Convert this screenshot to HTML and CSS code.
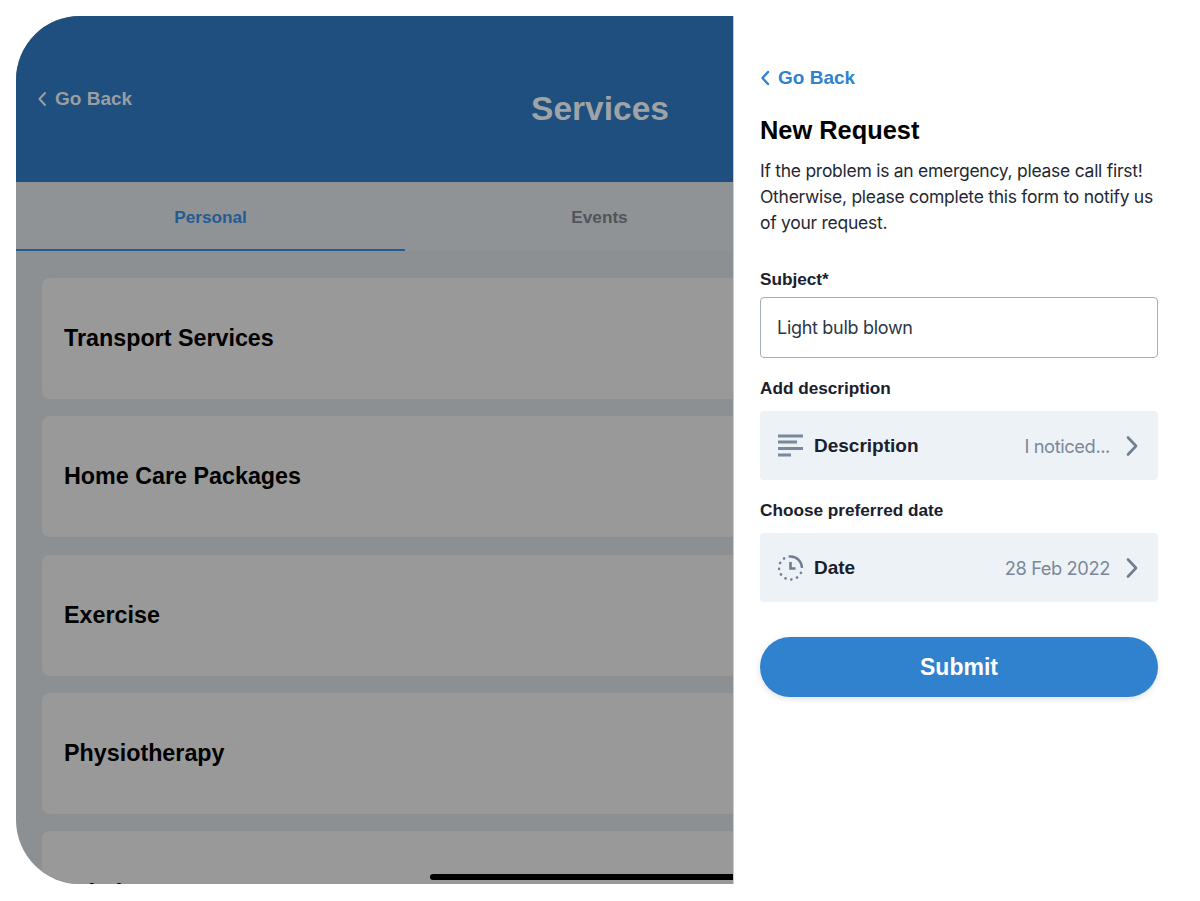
FILE: index.html
```html
<!DOCTYPE html>
<html lang="en">
<head>
  <meta charset="UTF-8">
  <title>New Request</title>
  <link rel="stylesheet" href="styles.css">
</head>
<body>
  <div class="stage">
    <div class="tablet">
      <div class="services">
        <div class="top-bar">
          <a class="back back-dim">
            <svg width="10" height="16" viewBox="0 0 10 16"><path d="M8 2 2.500 8 8 14" fill="none" stroke="currentColor" stroke-width="2" stroke-linecap="round" stroke-linejoin="round"/></svg>
            Go Back
          </a>
          <h1>Services</h1>
        </div>
        <div class="tabs">
          <div class="tab active">Personal</div>
          <div class="tab">Events</div>
        </div>
        <div class="cards">
          <div class="card">Transport Services</div>
          <div class="card">Home Care Packages</div>
          <div class="card">Exercise</div>
          <div class="card">Physiotherapy</div>
          <div class="card">Admin</div>
        </div>
      </div>
      <div class="home-bar"></div>
    </div>

    <div class="request">
      <a class="back">
        <svg width="10" height="16" viewBox="0 0 10 16"><path d="M8 2 2.500 8 8 14" fill="none" stroke="currentColor" stroke-width="2.400" stroke-linecap="round" stroke-linejoin="round"/></svg>
        Go Back
      </a>
      <h2>New Request</h2>
      <p class="intro">If the problem is an emergency, please call first! Otherwise, please complete this form to notify us of your request.</p>

      <label class="label label-subject">Subject*</label>
      <div class="input">Light bulb blown</div>

      <label class="label">Add description</label>
      <div class="row">
        <svg class="row-icon" width="26" height="24" viewBox="0 0 26 24"><path d="M0 2h25M0 8h19M0 14.500h25M0 21h13" fill="none" stroke="#7a8899" stroke-width="3"/></svg>
        <span class="row-name">Description</span>
        <span class="row-value">I noticed...</span>
        <svg class="row-arrow" width="12" height="20" viewBox="0 0 12 20"><path d="M2 1.500l8 8.500-8 8.500" fill="none" stroke="#6f7f90" stroke-width="2.600" stroke-linecap="round" stroke-linejoin="round"/></svg>
      </div>

      <label class="label">Choose preferred date</label>
      <div class="row">
        <svg class="row-icon" width="26" height="26" viewBox="0 0 26 26">
          <path d="M12.500 1.500a11.500 11.500 0 0 1 11.500 11.500" fill="none" stroke="#6f7f90" stroke-width="2.400"/>
          <path d="M24 13a11.500 11.500 0 1 1-11.500-11.500" fill="none" stroke="#6f7f90" stroke-width="2.600" stroke-linecap="round" stroke-dasharray="0.100 5.900" stroke-dashoffset="-5"/>
          <path d="M12.500 7v6.500h5" fill="none" stroke="#6f7f90" stroke-width="2.600"/>
        </svg>
        <span class="row-name">Date</span>
        <span class="row-value">28 Feb 2022</span>
        <svg class="row-arrow" width="12" height="20" viewBox="0 0 12 20"><path d="M2 1.500l8 8.500-8 8.500" fill="none" stroke="#6f7f90" stroke-width="2.600" stroke-linecap="round" stroke-linejoin="round"/></svg>
      </div>

      <button class="submit">Submit</button>
    </div>
  </div>
</body>
</html>
```

FILE: styles.css
```css
* {
  box-sizing: border-box;
}
body {
  margin: 0;
  background: #fff;
  font-family: 'Liberation Sans', sans-serif;
}
.stage {
  display: flex;
  height: 901px;
  padding: 16px 0 17px 16px;
}
.back {
  display: flex;
  align-items: center;
  gap: 8px;
  font-size: 19px;
  line-height: 24px;
  font-weight: 700;
  color: #3182ce;
}

/* left side, dimmed tablet screen */
.tablet {
  position: relative;
  width: 718px;
  height: 868px;
  flex: none;
  overflow: hidden;
  border-radius: 64px 0 0 64px;
  background: #8c9092;
  border-right: 1px solid #c9cbcd;
}
.services {
  width: 1168px;
}
.top-bar {
  position: relative;
  height: 166px;
  background: #1e4f7e;
}
.top-bar h1 {
  margin: 0;
  padding-top: 73px;
  text-align: center;
  font-size: 33.500px;
  line-height: 40px;
  font-weight: 700;
  color: #a0a3a6;
}
.back-dim {
  position: absolute;
  left: 21px;
  top: 71px;
  color: #9a9ea3;
}
.tabs {
  display: flex;
  height: 69px;
  background: #8f9395;
}
.tab {
  flex: 0 0 389px;
  padding-top: 25px;
  text-align: center;
  font-size: 17.200px;
  line-height: 20px;
  font-weight: 700;
  color: #50555c;
}
.tab.active {
  color: #245c92;
  border-bottom: 2px solid #245c92;
}
.cards {
  display: flex;
  flex-direction: column;
  gap: 17.300px;
  padding: 27px 0 0 26px;
}
.card {
  height: 121px;
  flex: none;
  padding-left: 22px;
  display: flex;
  align-items: center;
  background: #999;
  border-radius: 8px 0 0 8px;
  font-size: 23.300px;
  font-weight: 700;
  color: #000;
}
.card:last-child {
  padding-top: 4px;
}
.home-bar {
  position: absolute;
  left: 414px;
  right: 0;
  bottom: 4px;
  height: 6px;
  background: #000;
  border-radius: 3px 0 0 3px;
}

/* right side, the form */
.request {
  width: 398px;
  margin-left: 26px;
  padding-top: 50px;
}
.request h2 {
  margin: 25px 0 0;
  font-size: 25.400px;
  line-height: 30px;
  font-weight: 700;
  color: #000;
}
.intro {
  margin: 13px 0 0;
  font-family: 'Inter', sans-serif;
  font-size: 17.500px;
  line-height: 26px;
  letter-spacing: -0.270px;
  color: #1f2933;
}
.label {
  display: block;
  margin: 13px 0 8px;
  font-size: 17.200px;
  line-height: 20px;
  font-weight: 700;
  color: #1a202c;
}
.label-subject {
  margin-top: 33px;
}
.input {
  height: 61px;
  padding: 0 16px;
  display: flex;
  align-items: center;
  background: #fff;
  border: 1px solid #a0aec0;
  border-radius: 4px;
  font-family: 'Inter', sans-serif;
  font-size: 18px;
  letter-spacing: -0.300px;
  color: #2d3748;
}
.input + .label {
  margin-top: 20px;
  margin-bottom: 13px;
}
.row {
  height: 69px;
  padding: 0 20px 0 18px;
  display: flex;
  align-items: center;
  background: #edf2f7;
  border-radius: 4px;
}
.row + .label {
  margin-top: 20px;
  margin-bottom: 13px;
}
.row-icon {
  flex: none;
  margin-right: 10px;
}
.row-name {
  flex: 1;
  font-size: 19px;
  font-weight: 700;
  color: #1a202c;
}
.row-value {
  font-family: 'Inter', sans-serif;
  font-size: 18.300px;
  letter-spacing: -0.400px;
  color: #7a8899;
}
.row-arrow {
  flex: none;
  margin-left: 16px;
}
.submit {
  display: block;
  width: 100%;
  height: 60px;
  margin-top: 35px;
  border: none;
  border-radius: 30px;
  background: #3182ce;
  box-shadow: 0 2px 6px rgba(0,0,0,0.12);
  color: #fff;
  font-family: inherit;
  font-size: 23px;
  font-weight: 700;
}
```
